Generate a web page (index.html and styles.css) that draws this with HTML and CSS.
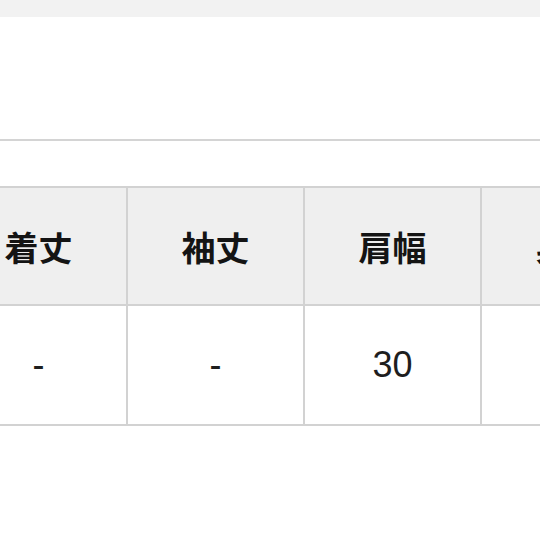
FILE: index.html
```html
<!DOCTYPE html>
<html lang="ja">
<head>
<meta charset="utf-8">
<link rel="stylesheet" href="styles.css">
</head>
<body>
<div class="topband"></div>
<div class="spacer"></div>
<div class="rule"></div>
<div class="gap"></div>
<div class="tablewrap">
  <table class="size">
    <tr>
      <th>着丈</th>
      <th>袖丈</th>
      <th>肩幅</th>
      <th>身幅</th>
    </tr>
    <tr>
      <td>-</td>
      <td>-</td>
      <td>30</td>
      <td></td>
    </tr>
  </table>
</div>
</body>
</html>
```

FILE: styles.css
```css
html, body {
  margin: 0;
  padding: 0;
  background: #ffffff;
  width: 540px;
  height: 540px;
  overflow: hidden;
  font-family: "Liberation Sans", "Noto Sans CJK JP", sans-serif;
}
.topband {
  height: 17px;
  background: #f2f2f2;
}
.spacer {
  height: 122px;
}
.rule {
  height: 2px;
  background: #d4d4d4;
}
.gap {
  height: 45px;
}
.tablewrap {
  width: 540px;
  overflow: hidden;
}
.size {
  border-collapse: separate;
  border-spacing: 0;
  margin-left: -49px;
  width: 708px;
  min-width: 708px;
  border-top: 2px solid #d2d2d2;
  table-layout: fixed;
}
.size th,
.size td {
  width: 175px;
  padding: 0;
  text-align: center;
  border-right: 2px solid #d2d2d2;
  border-bottom: 2px solid #d2d2d2;
}
.size th {
  height: 116px;
  background: #efefef;
  font-family: "Noto Sans CJK JP", sans-serif;
  font-weight: 700;
  font-size: 34px;
  color: #141414;
}
.size td {
  height: 118px;
  background: #ffffff;
  font-size: 36px;
  font-weight: 400;
  color: #1e1e1e;
}
```
